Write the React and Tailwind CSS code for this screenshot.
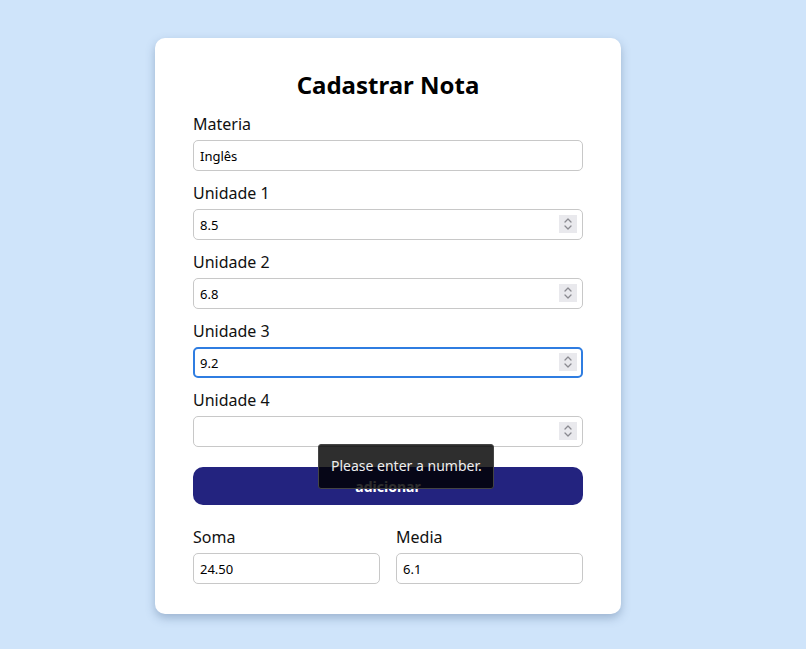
import React from "react";

function Spinner() {
  return (
    <div className="absolute right-[6px] top-[6px] w-[18px] h-[18px] bg-[#e9e9ed] flex flex-col items-center justify-center pointer-events-none">
      <svg width="10" height="14" viewBox="0 0 10 14" fill="none" stroke="#8a8a90" strokeWidth="1.3" strokeLinecap="round" strokeLinejoin="round">
        <path d="M2 5 L5 2 L8 5" />
        <path d="M2 9 L5 12 L8 9" />
      </svg>
    </div>
  );
}

function Field({ label, value, number, focused }) {
  return (
    <div className="flex flex-col mb-[10px]">
      <label className="text-[16px] leading-[24px] text-[#111] mb-[4px]">{label}</label>
      <div className="relative">
        <input
          type="text"
          readOnly
          value={value}
          className={
            focused
              ? "w-full h-[31px] rounded-[5px] border-2 border-[#2f7de1] px-[5px] text-[13px] text-black bg-white outline-none"
              : "w-full h-[31px] rounded-[5px] border border-[#c8c8c8] px-[6px] text-[13px] text-black bg-white outline-none"
          }
        />
        {number && <Spinner />}
      </div>
    </div>
  );
}

export default function App() {
  return (
    <div className="min-h-[649px] w-full bg-[#cfe4fa] pl-[155px] pt-[38px]" style={{ fontFamily: '"Noto Sans", "Open Sans", sans-serif' }}>
      <div className="relative w-[466px] bg-white rounded-[10px] shadow-[0_4px_10px_rgba(60,90,130,0.35)] px-[38px] pt-[29px] pb-[30px]">
        <h2 className="text-[24px] leading-[36px] font-bold text-center text-black mb-[9px]">Cadastrar Nota</h2>
        <Field label="Materia" value="Inglês" />
        <Field label="Unidade 1" value="8.5" number />
        <Field label="Unidade 2" value="6.8" number />
        <Field label="Unidade 3" value="9.2" number focused />
        <Field label="Unidade 4" value="" number />
        <button className="mt-[10px] w-full h-[38px] rounded-[10px] bg-[#23237f] text-white font-bold text-[14px]">adicionar</button>
        <div className="flex gap-[16px] mt-[20px]">
          <div className="flex-1 flex flex-col">
            <label className="text-[16px] leading-[24px] text-[#111] mb-[4px]">Soma</label>
            <input type="text" readOnly value="24.50" className="w-full h-[31px] rounded-[5px] border border-[#c8c8c8] px-[6px] text-[13px] text-black bg-white outline-none" />
          </div>
          <div className="flex-1 flex flex-col">
            <label className="text-[16px] leading-[24px] text-[#111] mb-[4px]">Media</label>
            <input type="text" readOnly value="6.1" className="w-full h-[31px] rounded-[5px] border border-[#c8c8c8] px-[6px] text-[13px] text-black bg-white outline-none" />
          </div>
        </div>
        <div className="absolute left-[163px] top-[406px] w-[176px] h-[45px] rounded-[3px] bg-[rgba(0,0,0,0.82)] border border-[#444] text-[#eee] text-[14px] pl-[12px] pt-[11px] leading-[20px]">
          Please enter a number.
        </div>
      </div>
    </div>
  );
}
